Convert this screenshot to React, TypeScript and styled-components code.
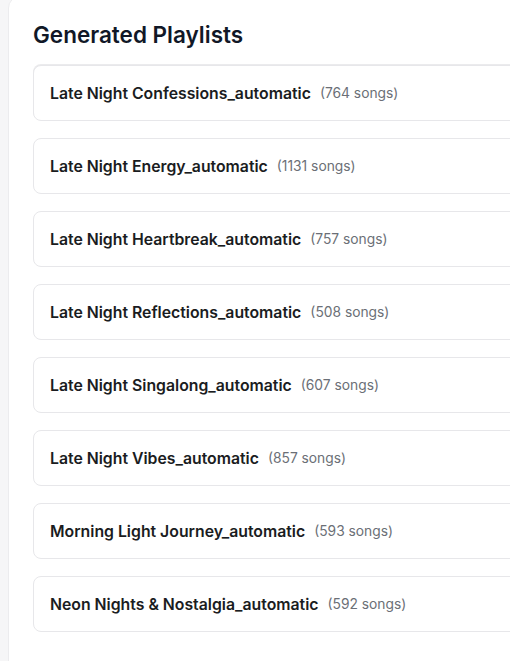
import styled, { createGlobalStyle } from "styled-components";

const playlists = [
  { name: "Late Night Confessions_automatic", count: 764 },
  { name: "Late Night Energy_automatic", count: 1131 },
  { name: "Late Night Heartbreak_automatic", count: 757 },
  { name: "Late Night Reflections_automatic", count: 508 },
  { name: "Late Night Singalong_automatic", count: 607 },
  { name: "Late Night Vibes_automatic", count: 857 },
  { name: "Morning Light Journey_automatic", count: 593 },
  { name: "Neon Nights & Nostalgia_automatic", count: 592 },
];

const App = () => {
  return (
    <>
      <GlobalStyle />
      <Page>
        <Card>
          <Title>Generated Playlists</Title>
          <List>
            {playlists.map((p) => (
              <Item key={p.name}>
                <Name>{p.name}</Name>
                <Count>({p.count} songs)</Count>
              </Item>
            ))}
          </List>
        </Card>
      </Page>
    </>
  );
};

//*STYLES
const GlobalStyle = createGlobalStyle`
  html, body {
    margin: 0;
    padding: 0;
    background: #f6f6f7;
    overflow: hidden;
  }
  body {
    font-family: Inter, "Noto Sans", "Liberation Sans", sans-serif;
    -webkit-font-smoothing: antialiased;
  }
`;

const Page = styled.div`
  width: 510px;
  height: 661px;
  overflow: hidden;
  padding-left: 8px;
  box-sizing: border-box;
`;

const Card = styled.div`
  width: 640px;
  margin-top: -4px;
  min-height: 700px;
  background: #ffffff;
  border: 1px solid #ececee;
  border-radius: 12px;
  padding: 22px 24px 0;
  box-sizing: border-box;
`;

const Title = styled.h2`
  margin: 0 0 14px;
  font-size: 22.5px;
  line-height: 32px;
  font-weight: 600;
  color: #111827;
`;

const List = styled.div`
  display: flex;
  flex-direction: column;
  gap: 17px;
`;

const Item = styled.div`
  display: flex;
  align-items: center;
  gap: 9px;
  height: 56px;
  padding: 0 16px;
  box-sizing: border-box;
  border: 1px solid #e7e7ea;
  border-radius: 8px;
  background: #fff;
  &:first-child {
    box-shadow: 0 -1px 0 #ebebed;
  }
`;

const Name = styled.span`
  font-size: 15.8px;
  font-weight: 600;
  color: #1a1c21;
`;

const Count = styled.span`
  font-size: 13.8px;
  color: #6b6f76;
`;

export default App;
